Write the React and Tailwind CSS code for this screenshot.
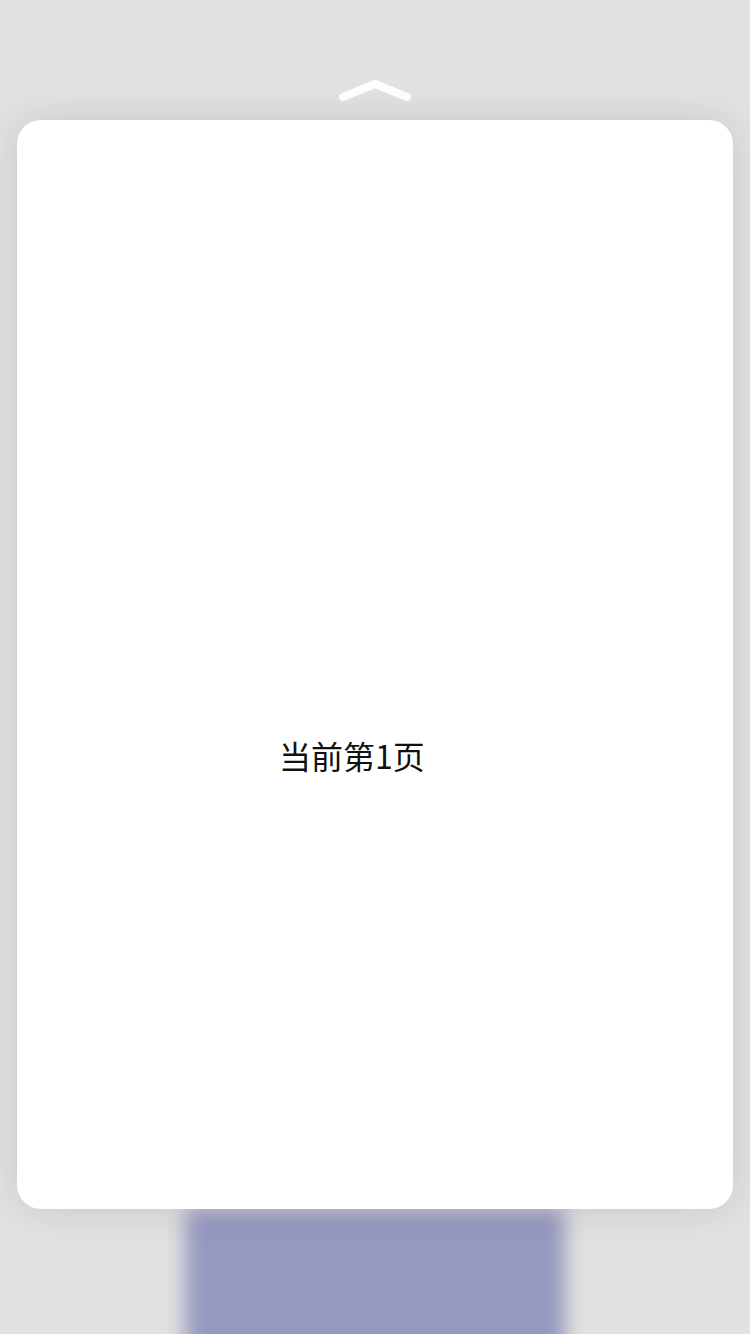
import React from 'react';

const App = () => {
  return (
    <div className="w-[750px] h-[1334px] overflow-hidden bg-[#e2e2e2] flex flex-col" style={{ fontFamily: '"Noto Sans CJK SC", "Noto Sans", sans-serif' }}>
      {/* Pull-up handle */}
      <div className="h-[120px] flex items-end justify-center pb-[15px] shrink-0">
        <svg width="72" height="26" viewBox="0 0 72 26" fill="none">
          <path d="M4 18 L36 5 L68 18" stroke="#ffffff" strokeWidth="8" strokeLinecap="round" strokeLinejoin="round" />
        </svg>
      </div>

      {/* Current page card */}
      <div className="relative z-10 mx-[17px] h-[1089px] shrink-0 rounded-[24px] bg-white shadow-[0_0_40px_rgba(0,0,0,0.12)] flex items-center justify-center pt-[180px]">
        <span className="text-[32px] leading-none text-[#111111] pr-[46px]">当前第1页</span>
      </div>

      {/* Next page peeking behind */}
      <div className="mx-auto w-[380px] h-[160px] shrink-0 bg-[#9698c0] blur-[10px]" />
    </div>
  );
};

export default App;
